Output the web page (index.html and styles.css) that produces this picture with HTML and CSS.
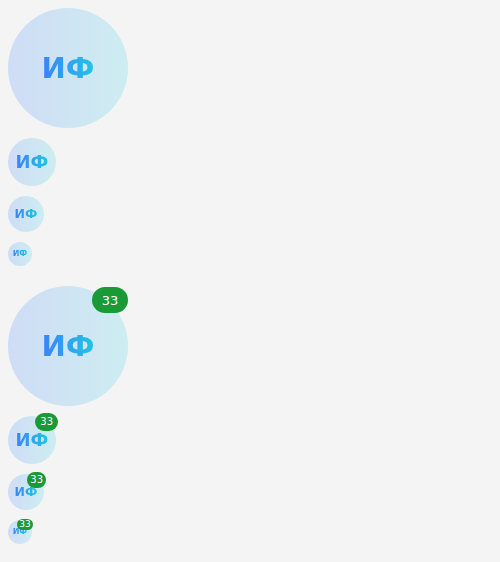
FILE: index.html
```html
<!DOCTYPE html>
<html lang="ru">
<head>
<meta charset="utf-8">
<link rel="stylesheet" href="styles.css">
</head>
<body>
<div class="group">
  <div class="avatar xl"><span class="initials">ИФ</span></div>
  <div class="avatar lg"><span class="initials">ИФ</span></div>
  <div class="avatar md"><span class="initials">ИФ</span></div>
  <div class="avatar sm"><span class="initials">ИФ</span></div>
</div>
<div class="group">
  <div class="avatar xl"><span class="initials">ИФ</span><span class="badge">33</span></div>
  <div class="avatar lg"><span class="initials">ИФ</span><span class="badge">33</span></div>
  <div class="avatar md"><span class="initials">ИФ</span><span class="badge">33</span></div>
  <div class="avatar sm"><span class="initials">ИФ</span><span class="badge">33</span></div>
</div>
</body>
</html>
```
FILE: styles.css
```css
html, body {
  margin: 0;
  background: #f4f4f4;
}
body {
  padding: 8px;
  font-family: "DejaVu Sans", sans-serif;
}
.group {
  display: flex;
  flex-direction: column;
  align-items: flex-start;
  gap: 10px;
  margin-bottom: 20px;
}
.avatar {
  position: relative;
  border-radius: 50%;
  background: linear-gradient(90deg, #cfdcf6, #cdedf1);
  display: flex;
  align-items: center;
  justify-content: center;
  flex: none;
}
.initials {
  font-weight: 600;
  background: linear-gradient(90deg, #3b82f6, #22c5e6);
  -webkit-background-clip: text;
  background-clip: text;
  color: transparent;
  line-height: 1;
}
.xl { width: 120px; height: 120px; }
.xl .initials { font-size: 29px; }
.lg { width: 48px; height: 48px; }
.lg .initials { font-size: 18px; }
.md { width: 36px; height: 36px; }
.md .initials { font-size: 12.5px; }
.sm { width: 24px; height: 24px; }
.sm .initials { font-size: 8px; }

.badge {
  position: absolute;
  background: #1a9a37;
  color: #fff;
  border-radius: 999px;
  display: flex;
  align-items: center;
  justify-content: center;
  line-height: 1;
  font-weight: 400;
}
.xl .badge { top: 1px; right: 0; height: 26px; width: 36px; font-size: 13px; }
.lg .badge { top: -3px; right: -2px; height: 18px; padding: 0 5px; font-size: 10px; }
.md .badge { top: -2px; right: -2px; height: 16px; padding: 0 3px; font-size: 10px; }
.sm .badge { top: -1px; right: -1px; height: 11px; width: 16px; font-size: 9px; }
```
